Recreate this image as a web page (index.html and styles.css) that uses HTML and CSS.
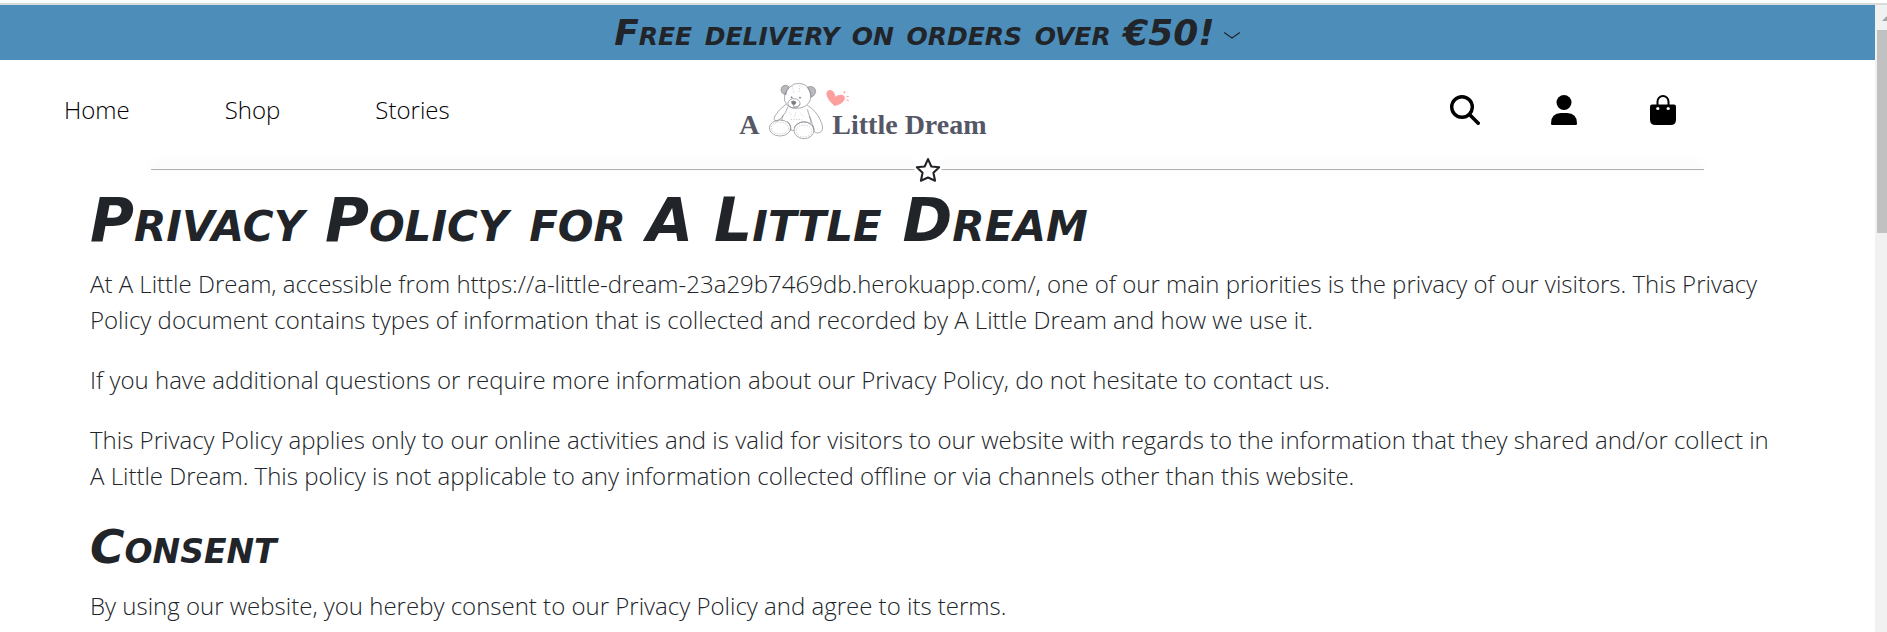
FILE: index.html
```html
<!DOCTYPE html>
<html lang="en">
<head>
<meta charset="utf-8">
<title>Privacy Policy – A Little Dream</title>
<link rel="stylesheet" href="styles.css">
</head>
<body>
<div class="topline"></div>
<div class="viewport">
  <div class="page">
    <div class="banner">
      <h2 class="banner-text">Free delivery on orders over €50!</h2>
      <svg class="chevron" viewBox="0 0 16 16" aria-hidden="true"><path d="M1 7.500L8 12.500L15 7.500"/></svg>
    </div>
    <header class="header">
      <nav class="nav">
        <a href="#">Home</a>
        <a href="#">Shop</a>
        <a href="#">Stories</a>
      </nav>
      <a class="logo" href="#" aria-label="A Little Dream">
        <svg viewBox="45 24 765 180">
          <g class="logo-text">
            <text x="58" y="186">A</text>
            <text x="337" y="186">Little Dream</text>
          </g>
          <g class="bear">
            <path class="shade" d="M198 68Q184 66 183 54Q184 41 196 40Q204 40 208 46Q198 56 198 68Z"/>
            <path class="shade" d="M262 46Q268 42 276 44Q288 48 287 60Q284 72 273 76Q273 60 262 46Z"/>
            <path d="M208 46Q220 33 238 34Q258 36 268 52Q276 70 270 86Q262 104 240 108Q214 112 200 98Q190 86 194 68Q198 54 208 46Z"/>
            <ellipse cx="222" cy="94" rx="18" ry="14"/>
            <path class="dark" d="M214 89Q221 84 228 90Q227 98 221 99Q215 97 214 89Z"/>
            <path d="M221 99V104Q232 108 241 97"/>
            <circle class="dark" cx="215" cy="76" r="2"/>
            <circle class="dark" cx="240" cy="77" r="2"/>
            <path d="M198 97Q176 112 165 132Q158 146 170 148Q184 142 196 122L204 104"/>
            <path d="M262 100Q288 116 300 142Q313 170 304 178Q292 188 282 178Q280 158 270 138L262 112"/>
            <path d="M190 130Q184 140 186 146M268 132Q275 144 272 152M210 172Q218 176 222 176"/>
            <ellipse cx="180" cy="168" rx="32" ry="24"/>
            <ellipse cx="252" cy="175" rx="30" ry="25"/>
            <path d="M202 148Q214 156 212 176M222 168Q230 152 250 149Q276 150 283 172"/>
            <ellipse class="stitch" cx="180" cy="168" rx="26" ry="18"/>
            <ellipse class="stitch" cx="252" cy="177" rx="23" ry="18"/>
            <path class="stitch" d="M206 120L216 130M228 122L222 136M242 124L250 132M212 142H246M216 42L222 62M240 40L236 62"/>
          </g>
          <g class="heart">
            <path d="M344 102Q322 84 319 66Q320 54 332 54Q344 57 346 74Q356 66 368 69Q378 74 373 84Q366 97 344 102Z"/>
            <circle cx="373" cy="61" r="3"/>
            <path d="M379 73L386 72L386 75L380 76ZM379 82L387 85L385 88L379 85Z"/>
          </g>
        </svg>
      </a>
      <div class="actions">
        <button type="button" aria-label="Search"><svg viewBox="0 0 30 30"><g fill="none" stroke="#000"><circle cx="12" cy="12" r="10.300" stroke-width="3.400"/><path d="M19.500 19.500L28.200 28.200" stroke-width="3.600" stroke-linecap="round"/></g></svg></button>
        <button type="button" aria-label="Account"><svg viewBox="0 0 30 30"><circle cx="15" cy="7.500" r="7.500"/><path d="M3.300 30Q2 30 2 28.500Q2 18 12 18H18Q28 18 28 28.500Q28 30 26.700 30Z"/></svg></button>
        <button type="button" aria-label="Shopping bag"><svg viewBox="0 0 30 30"><path d="M4 9.500H26Q28 9.500 28 11.500V24.500Q28 30 22.500 30H7.500Q2 30 2 24.500V11.500Q2 9.500 4 9.500Z"/><path d="M9.500 10V6.500a5.500 5.500 0 0 1 11 0V10" fill="none" stroke="#000" stroke-width="2"/><g fill="#fff"><circle cx="9.800" cy="13.500" r="1.600"/><circle cx="20.200" cy="13.500" r="1.600"/></g></svg></button>
      </div>
    </header>
    <div class="divider">
      <svg class="star" viewBox="0 0 24 24" aria-hidden="true"><path d="M12 1.500L15.200 8.600L22.800 9.400L17.200 14.600L18.800 22.300L12 19.200L5.200 22.300L6.800 14.600L1.200 9.400L8.800 8.600Z"/></svg>
    </div>
    <main class="content">
      <h1>Privacy Policy for A Little Dream</h1>
      <p>At A Little Dream, accessible from https://a-little-dream-23a29b7469db.herokuapp.com/, one of our main priorities is the privacy of our visitors. This Privacy Policy document contains types of information that is collected and recorded by A Little Dream and how we use it.</p>
      <p>If you have additional questions or require more information about our Privacy Policy, do not hesitate to contact us.</p>
      <p>This Privacy Policy applies only to our online activities and is valid for visitors to our website with regards to the information that they shared and/or collect in A Little Dream. This policy is not applicable to any information collected offline or via channels other than this website.</p>
      <h2>Consent</h2>
      <p>By using our website, you hereby consent to our Privacy Policy and agree to its terms.</p>
    </main>
  </div>
  <div class="scrollbar" aria-hidden="true">
    <svg class="scroll-arrow" viewBox="0 0 5 5"><path d="M0 5L5 0V5Z"/></svg>
    <div class="scroll-thumb"></div>
  </div>
</div>
</body>
</html>
```
FILE: styles.css
```css
* { box-sizing: border-box; }
html, body { height: 100%; }
body {
  margin: 0;
  display: flex;
  flex-direction: column;
  overflow: hidden;
  background: #fff;
  color: #212529;
  font-family: "Open Sans", "Noto Sans", sans-serif;
  font-size: 24px;
  font-weight: 300;
  line-height: 36px;
}
h1, h2 {
  margin: 0;
  font-family: "DejaVu Sans", sans-serif;
  font-weight: 700;
  font-style: italic;
  font-variant: small-caps;
}
.topline {
  flex: none;
  height: 5px;
  border-bottom: 2px solid #dadada;
}
.viewport {
  flex: 1;
  min-height: 0;
  display: flex;
}
.page {
  flex: 1;
  min-width: 0;
  overflow: hidden;
}
.banner {
  display: flex;
  align-items: center;
  justify-content: center;
  gap: 8px;
  height: 55px;
  padding-right: 20px;
  background: #4d8dba;
}
.banner-text {
  font-size: 36px;
  line-height: 48px;
}
.chevron {
  width: 18px;
  height: 18px;
  fill: none;
  stroke: #212529;
}
.header {
  display: grid;
  grid-template-columns: 39.6% auto 1fr;
  align-items: center;
  height: 100px;
  padding: 0 20px 0 0;
}
.nav {
  display: flex;
  gap: 95px;
  padding-left: 64px;
}
.nav a {
  color: #000;
  text-decoration: none;
}
.logo svg {
  display: block;
  width: 255px;
  height: 60px;
}
.logo-text {
  font-family: "Liberation Serif", serif;
  font-size: 84px;
  font-weight: 700;
  fill: #555766;
}
.bear { fill: none; stroke: #85858d; stroke-width: 2; }
.bear .shade { fill: #b9b9be; }
.bear .dark { fill: #77777f; }
.bear .stitch { stroke: #b5b5ba; stroke-dasharray: 4 4; }
.heart { fill: #fd9f9f; }
.actions {
  display: flex;
  justify-content: flex-end;
  gap: 69px;
  padding-right: 177px;
}
.actions button {
  padding: 0;
  border: 0;
  background: none;
}
.actions svg {
  display: block;
  width: 30px;
  height: 30px;
}
.divider {
  position: relative;
  height: 1px;
  margin: 9px 171px 0 151px;
  background: #b0b0b0;
  box-shadow: 0 -3px 12px rgba(0, 0, 0, .22);
}
.star {
  position: absolute;
  left: 50%;
  top: 50%;
  width: 27px;
  height: 27px;
  padding: 1px;
  background: #fff;
  transform: translate(-50%, -50%);
  fill: none;
  stroke: #212529;
  stroke-width: 2;
  stroke-linejoin: round;
}
.content { padding: 12px 95px 0 90px; }
.content h1 {
  font-size: 60px;
  line-height: 76px;
  margin-bottom: 8px;
}
.content h2 {
  font-size: 47px;
  line-height: 58px;
  margin-bottom: 12px;
}
.content p { margin: 0 0 24px; }
.scrollbar {
  width: 12px;
  flex: none;
  overflow: hidden;
  background: #f1f1f1;
  padding: 11px 0 0 2px;
}
.scroll-arrow {
  display: block;
  width: 5px;
  height: 5px;
  margin: 0 0 9px 5px;
  fill: #a3a3a3;
}
.scroll-thumb {
  height: 203px;
  background: #c1c1c1;
}
```
